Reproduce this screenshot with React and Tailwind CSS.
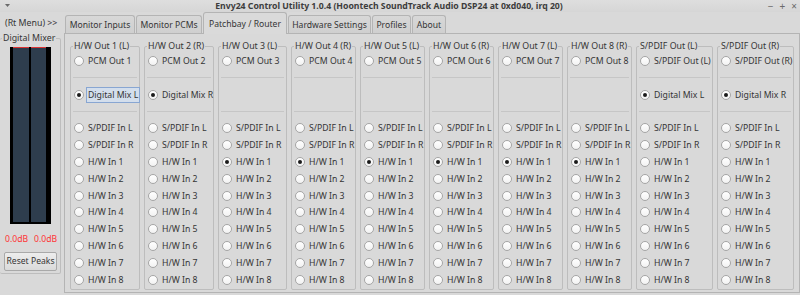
import React from "react";

const inputs = [
  "S/PDIF In L",
  "S/PDIF In R",
  "H/W In 1",
  "H/W In 2",
  "H/W In 3",
  "H/W In 4",
  "H/W In 5",
  "H/W In 6",
  "H/W In 7",
  "H/W In 8",
];

const columns = [
  { title: "H/W Out 1 (L)", first: "PCM Out 1", mix: "Digital Mix L", sel: "mix", focus: true },
  { title: "H/W Out 2 (R)", first: "PCM Out 2", mix: "Digital Mix R", sel: "mix" },
  { title: "H/W Out 3 (L)", first: "PCM Out 3", sel: "H/W In 1" },
  { title: "H/W Out 4 (R)", first: "PCM Out 4", sel: "H/W In 1" },
  { title: "H/W Out 5 (L)", first: "PCM Out 5", sel: "H/W In 1" },
  { title: "H/W Out 6 (R)", first: "PCM Out 6", sel: "H/W In 1" },
  { title: "H/W Out 7 (L)", first: "PCM Out 7", sel: "H/W In 1" },
  { title: "H/W Out 8 (R)", first: "PCM Out 8", sel: "H/W In 1" },
  { title: "S/PDIF Out (L)", first: "S/PDIF Out (L)", mix: "Digital Mix L", sel: "mix" },
  { title: "S/PDIF Out (R)", first: "S/PDIF Out (R)", mix: "Digital Mix R", sel: "mix" },
];

const tabs = [
  { name: "Monitor Inputs", w: "w-[70px]" },
  { name: "Monitor PCMs", w: "w-[66px]" },
  { name: "Patchbay / Router", w: "w-[84px]", active: true },
  { name: "Hardware Settings", w: "w-[83px]" },
  { name: "Profiles", w: "w-[39px]" },
  { name: "About", w: "w-[34px]" },
];

function Radio({ label, checked, focus, rowClass = "h-[17px]" }) {
  return (
    <div className={`flex items-center pl-[3px] ${rowClass}`}>
      <span className="w-[10px] h-[10px] shrink-0 rounded-full border border-[#a6a6a6] bg-gradient-to-b from-white to-[#f2f2f2] flex items-center justify-center">
        {checked && <span className="w-[4px] h-[4px] rounded-full bg-[#1a1a1a]" />}
      </span>
      <span
        className={`ml-[2px] whitespace-nowrap leading-[14px] px-[1px] text-[8.7px] ${
          focus ? "bg-[#d3deec] border border-[#88a6d2]" : "border border-transparent"
        }`}
      >
        {label}
      </span>
    </div>
  );
}

function Separator() {
  return (
    <div className="h-[17px] flex items-center px-[2px]">
      <div className="w-full border-t border-[#c6c6c6]" />
    </div>
  );
}

function RouteGroup({ col }) {
  return (
    <fieldset className="border border-[#bdbdbd] rounded-[2px] min-w-0 px-0 pb-[1px]">
      <legend className="ml-[2px] px-[1px] leading-[12px] whitespace-nowrap text-[8.8px]">{col.title}</legend>
      <Radio label={col.first} />
      <Separator />
      {col.mix ? (
        <Radio label={col.mix} checked={col.sel === "mix"} focus={col.focus} />
      ) : (
        <div className="h-[17px]" />
      )}
      <Separator />
      {inputs.map((name) => (
        <Radio key={name} label={name} checked={col.sel === name} rowClass="h-[16.8px]" />
      ))}
    </fieldset>
  );
}

export default function App() {
  return (
    <div
      className="w-[800px] h-[295px] overflow-hidden bg-[#d9d9d9] text-[#353535] text-[9px] flex flex-col"
      style={{ fontFamily: '"Noto Sans", "DejaVu Sans", sans-serif' }}
    >
      {/* Title bar */}
      <div className="h-[12px] shrink-0 flex items-center relative bg-gradient-to-b from-[#dedede] to-[#d6d6d6]">
        <svg className="absolute left-[5px] top-[4px]" width="5" height="3" viewBox="0 0 5 3">
          <polygon points="0,0 5,0 2.5,3" fill="#6a6a6a" />
        </svg>
        <div className="flex-1 text-center font-bold text-[#3d3d3d] text-[8.7px] leading-[12px] pr-[22px]">
          Envy24 Control Utility 1.0.4 (Hoontech SoundTrack Audio DSP24 at 0xd040, irq 20)
        </div>
        <div className="absolute right-[3px] top-0 flex items-center gap-[6px] text-[#6a6a6a] text-[10px] leading-[12px]">
          <span>−</span>
          <span>+</span>
          <span>×</span>
        </div>
      </div>

      {/* Body */}
      <div className="flex flex-1 min-h-0">
        {/* Left panel */}
        <div className="w-[64px] shrink-0 flex flex-col">
          <div className="pl-[5px] pt-[6px] leading-[11px] whitespace-nowrap text-[8.8px]">(Rt Menu) &gt;&gt;</div>
          <fieldset className="mt-[3px] w-[61px] border border-[#bdbdbd] border-l-0 rounded-[2px] px-0 flex flex-col items-start">
            <legend className="ml-[2px] px-[1px] leading-[12px] whitespace-nowrap text-[8.8px]">Digital Mixer</legend>
            <div className="mt-[3px] ml-[10px] w-[41px] h-[177px] bg-black flex pl-[3px] pb-[2px]">
              <div className="w-[16px] h-full bg-[#2e3d4d] border-t border-[#d33]" />
              <div className="w-[2px]" />
              <div className="w-[15px] h-full bg-[#2e3d4d] border-t border-[#d33]" />
            </div>
            <div className="mt-[10px] ml-[5px] flex gap-[6px] text-[#ff3333] leading-[11px] text-[8.6px]">
              <span>0.0dB</span>
              <span>0.0dB</span>
            </div>
            <button className="mt-[7px] ml-[4px] w-[53px] h-[19px] border border-[#a9a9a9] rounded-[2px] bg-gradient-to-b from-[#ededed] to-[#dadada] text-[#353535] text-[8.6px] leading-[17px] whitespace-nowrap">
              Reset Peaks
            </button>
            <div className="h-[2px]" />
          </fieldset>
        </div>

        {/* Tab widget */}
        <div className="flex-1 flex flex-col min-w-0">
          <div className="h-[21px] shrink-0 flex items-end pl-[1px] gap-[1px] relative z-10">
            {tabs.map((t) => (
              <div
                key={t.name}
                className={`${t.w} text-center whitespace-nowrap border border-[#b4b4b4] border-b-0 rounded-t-[3px] text-[8.6px] ${
                  t.active
                    ? "h-[22px] -mb-[1px] bg-[#dadada] leading-[20px] pt-[1px]"
                    : "h-[18px] bg-gradient-to-b from-[#d8d8d8] to-[#cfcfcf] leading-[17px] pt-[1px]"
                }`}
              >
                {t.name}
              </div>
            ))}
          </div>
          <div className="flex-1 border border-[#b4b4b4] mb-[2px] bg-[#d9d9d9] pl-[5px] pt-[6px]">
            <div className="grid grid-cols-[70px_70px_69px_65px_65px_65px_65px_65px_77px_77px] gap-[4px]">
              {columns.map((col) => (
                <RouteGroup key={col.title} col={col} />
              ))}
            </div>
          </div>
        </div>
      </div>
    </div>
  );
}
